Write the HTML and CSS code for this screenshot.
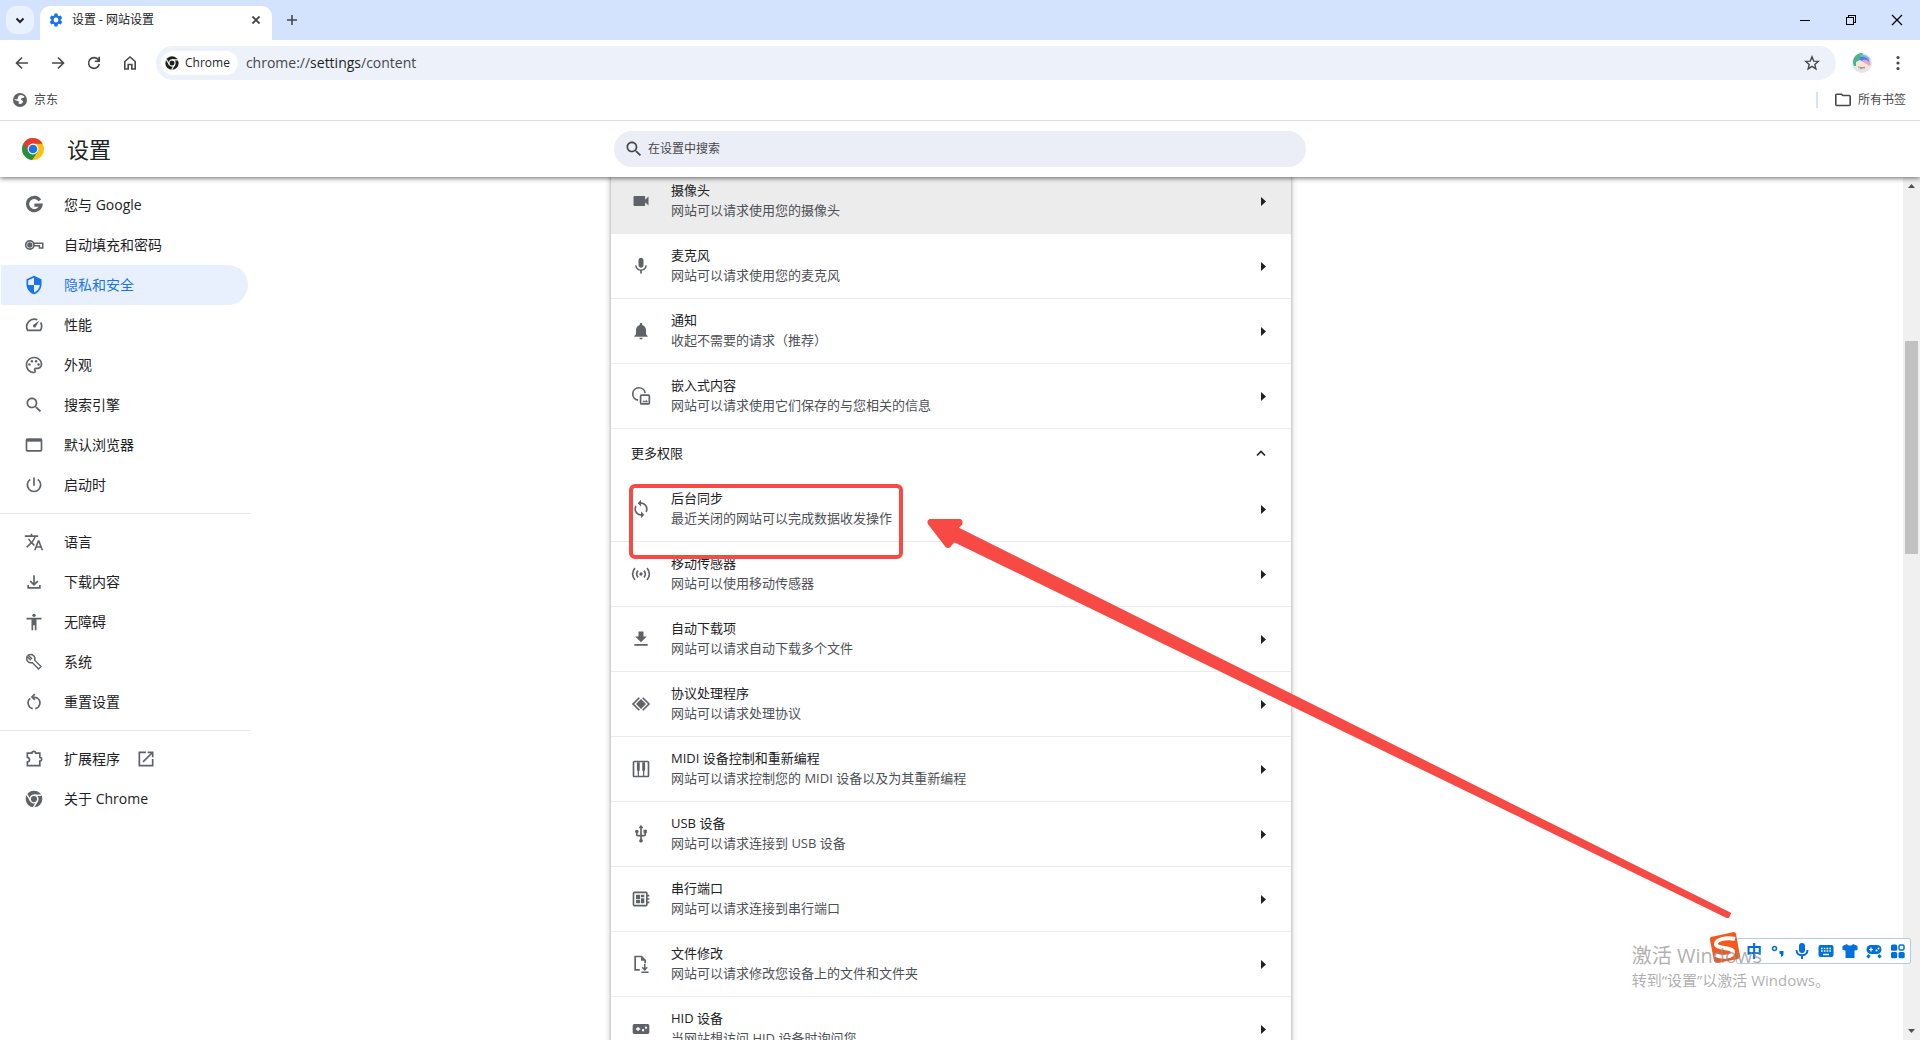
FILE: index.html
```html
<!DOCTYPE html>
<html lang="zh-CN">
<head>
<meta charset="utf-8">
<title>设置 - 网站设置</title>
<meta name="viewport" content="width=device-width, initial-scale=1">
<link rel="stylesheet" href="styles.css">
</head>
<body>
<svg class="defs" aria-hidden="true">
  <symbol id="search" viewBox="0 0 24 24"><path d="M15.5 14h-.79l-.28-.27C15.41 12.59 16 11.11 16 9.5 16 5.91 13.09 3 9.5 3S3 5.91 3 9.5 5.91 16 9.5 16c1.61 0 3.09-.59 4.23-1.57l.27.28v.79l5 4.99L20.49 19l-4.99-5zm-6 0C7.01 14 5 11.99 5 9.5S7.01 5 9.5 5 14 7.01 14 9.5 11.99 14 9.5 14z"/></symbol>
  <symbol id="chrome-mono" viewBox="0 0 24 24"><circle cx="12" cy="12" r="10"/><g fill="none" stroke="#fff" stroke-width="1.7"><circle cx="12" cy="12" r="4.6"/><path d="M12 7.4h9M8 14.3 3.4 6.4M16 14.3 11.5 22"/></g></symbol>
  <symbol id="mic" viewBox="0 0 24 24"><path d="M12 14c1.66 0 2.99-1.34 2.99-3L15 5c0-1.66-1.34-3-3-3S9 3.34 9 5v6c0 1.66 1.34 3 3 3zm5.3-3c0 3-2.54 5.1-5.3 5.1S6.7 14 6.7 11H5c0 3.41 2.72 6.23 6 6.72V21h2v-3.28c3.28-.48 6-3.3 6-6.72h-1.7z"/></symbol>
  <symbol id="arrow-right" viewBox="0 0 5 9"><path d="M0 0l5 4.5L0 9z"/></symbol>
</svg>

<header class="tab-strip">
  <button class="tab-search" aria-label="搜索标签页"><svg class="line" viewBox="0 0 16 16" width="16" height="16"><path d="M4.500 6.500 8 10l3.500-3.500" stroke-width="2"/></svg></button>
  <div class="tab">
    <svg class="blue" viewBox="0 0 24 24" width="16" height="16"><path d="M19.140 12.940c.04-.3.06-.61.06-.94 0-.32-.02-.64-.07-.94l2.030-1.580c.18-.14.23-.41.12-.61l-1.920-3.320c-.12-.22-.37-.29-.59-.22l-2.390.96c-.5-.38-1.030-.7-1.620-.94l-.36-2.540c-.04-.24-.24-.41-.48-.41h-3.840c-.24 0-.43.17-.47.41l-.36 2.540c-.59.24-1.130.57-1.620.94l-2.390-.96c-.22-.08-.47 0-.59.22L2.740 8.870c-.12.21-.08.47.12.61l2.030 1.580c-.05.3-.09.63-.09.94s.02.64.07.94l-2.030 1.580c-.18.14-.23.41-.12.61l1.920 3.320c.12.22.37.29.59.22l2.390-.96c.5.38 1.030.7 1.620.94l.36 2.540c.05.24.24.41.48.41h3.840c.24 0 .44-.17.47-.41l.36-2.540c.59-.24 1.130-.56 1.620-.94l2.390.96c.22.08.47 0 .59-.22l1.920-3.320c.12-.22.07-.47-.12-.61l-2.010-1.580zM12 15.600a3.600 3.600 0 1 1 0-7.200 3.600 3.600 0 0 1 0 7.200z"/></svg>
    <span class="tab-title">设置 - 网站设置</span>
    <button class="icon-button small" aria-label="关闭标签页"><svg class="line" viewBox="0 0 16 16" width="16" height="16"><path d="M4.500 4.500l7 7M11.500 4.500l-7 7" stroke-width="1.800"/></svg></button>
  </div>
  <button class="icon-button new-tab" aria-label="新标签页"><svg class="line" viewBox="0 0 16 16" width="16" height="16"><path d="M8 3v10M3 8h10" stroke-width="1.600"/></svg></button>
  <div class="window-buttons">
    <button aria-label="最小化"><svg class="line crisp" viewBox="0 0 12 12" width="12" height="12"><path d="M1 6.500h10"/></svg></button>
    <button aria-label="还原"><svg class="line crisp" viewBox="0 0 12 12" width="12" height="12"><path d="M1.500 3.500h7v7h-7zM3.500 3V1.500h7v7H9"/></svg></button>
    <button aria-label="关闭"><svg class="line" viewBox="0 0 12 12" width="12" height="12"><path d="M1 1l10 10M11 1 1 11" stroke-width="1.200"/></svg></button>
  </div>
</header>

<nav class="toolbar" aria-label="导航">
  <button class="icon-button" aria-label="返回"><svg class="line" viewBox="0 0 16 16" width="16" height="16"><path d="M14 8H3M8 2.500 2.500 8 8 13.500" stroke-width="1.600"/></svg></button>
  <button class="icon-button" aria-label="前进"><svg class="line" viewBox="0 0 16 16" width="16" height="16"><path d="M2 8h11M8 2.500 13.500 8 8 13.500" stroke-width="1.600"/></svg></button>
  <button class="icon-button" aria-label="重新加载"><svg class="line" viewBox="0 0 16 16" width="16" height="16"><path d="M13.300 9A5.400 5.400 0 1 1 12.500 5M13.200 1.800v4.500H8.800" stroke-width="1.600"/></svg></button>
  <button class="icon-button" aria-label="主页"><svg class="line" viewBox="0 0 16 16" width="16" height="16"><path d="M2.800 14V6.500L8 2l5.200 4.500V14H9.800V9.500H6.200V14z" stroke-width="1.600"/></svg></button>
  <div class="omnibox">
    <span class="site-chip"><svg width="16" height="16"><use href="#chrome-mono"/></svg>Chrome</span>
    <span class="address">chrome://<b>settings</b>/content</span>
    <button class="icon-button star" aria-label="为此标签页添加书签"><svg class="line" viewBox="0 0 16 16" width="16" height="16"><path d="M8 1.800l1.700 4.300 4.600.3-3.500 3 1.100 4.500L8 11.400l-3.900 2.500 1.100-4.500-3.500-3 4.600-.3z" stroke-width="1.400"/></svg></button>
  </div>
  <button class="icon-button avatar" aria-label="个人资料"><svg viewBox="0 0 20 20" width="20" height="20"><circle cx="10" cy="10" r="10" fill="#e6e4e6"/><path d="M2 13A9 9 0 0 1 10 0l2 3-6 10z" fill="#45b58e"/><path d="M8 2a10 10 0 0 1 10 4l-1 1-8-2z" fill="#66c8d5"/><path d="M8 4c4-1 9 1 10 6l-3 1-7-4z" fill="#6472e8"/><path d="M10 7c4-1 8 1 9 5l-4 1z" fill="#e9a5d4"/><path d="M4 9l4-2 8 5 1 4-9-1-4-2z" fill="#f5e7cf"/><path d="M6 14l7 1M8 16l5-2" stroke="#9a94a0" fill="none"/></svg></button>
  <button class="icon-button" aria-label="自定义及控制"><svg viewBox="0 0 16 16" width="16" height="16"><circle cx="8" cy="2.500" r="1.600"/><circle cx="8" cy="8" r="1.600"/><circle cx="8" cy="13.500" r="1.600"/></svg></button>
</nav>

<div class="bookmarks">
  <a href="#"><svg class="grey" viewBox="0 0 16 16" width="16" height="16"><circle cx="8" cy="8" r="7"/><path d="M7 3.500c2-1.500 5 0 5.500 1.500-1 1.500-3 .5-3.500 2s2 1 2 2.500-2 3-3.500 2.500S7.500 9.500 6 9 2.500 8 2.500 7.500 5 8 5.500 7 6 4.500 7 3.500z" fill="#fff"/></svg>京东</a>
  <a class="all-bookmarks" href="#"><svg class="line" viewBox="0 0 18 16" width="18" height="16"><path d="M1.800 3v9.500c0 .6.400 1 1 1h12.400c.6 0 1-.4 1-1v-8c0-.6-.4-1-1-1H9L7.500 2.300H2.800c-.6 0-1 .2-1 .7z" stroke-width="1.600"/></svg>所有书签</a>
</div>

<header class="settings-header">
  <svg viewBox="0 0 24 24" width="24" height="24"><circle cx="12" cy="12" r="11" fill="#fbc116"/><path d="M12 12 2.470 6.500a11 11 0 0 0 8.600 16.460L16.800 14.700z" fill="#229342"/><path d="M2.470 6.500A11 11 0 0 1 21.600 6.700H12L7.240 14.750z" fill="#e33b2e"/><circle cx="12" cy="12" r="5.400" fill="#fff"/><circle cx="12" cy="12" r="4.300" fill="#1a73e8"/></svg>
  <h1>设置</h1>
  <label class="search"><svg width="20" height="20"><use href="#search"/></svg><input type="text" placeholder="在设置中搜索" aria-label="在设置中搜索"></label>
</header>

<div class="settings-body">
  <nav class="sidebar" aria-label="设置">
    <a href="#"><svg viewBox="0 0 24 24"><path d="M19 6.400A8 8 0 1 0 20.200 12.200H12.500" fill="none" stroke="currentColor" stroke-width="3.800"/><path d="M20.200 10.400h1.700v3.600h-3.600z"/></svg>您与 Google</a>
    <a href="#"><svg class="line" viewBox="0 0 24 24"><circle cx="7" cy="12" r="5"/><circle cx="7" cy="12" r="2.200" fill="currentColor"/><path d="M12 10h10.500v5.500h-4V13H12" stroke-width="1.800"/></svg>自动填充和密码</a>
    <a class="active" href="#" aria-current="page"><svg viewBox="0 0 24 24"><path d="M12 1L3 5v6c0 5.550 3.840 10.740 9 12 5.160-1.260 9-6.450 9-12V5l-9-4zm0 10.990h7c-.53 4.120-3.280 7.790-7 8.940V12H5V6.300l7-3.110v8.800z"/></svg>隐私和安全</a>
    <a href="#"><svg class="line" viewBox="0 0 24 24"><path d="M16 5.800A9 9 0 0 0 4.500 18.500h15A9 9 0 0 0 20 9" stroke-width="2"/><path d="M18.500 6.500 11 12a2 2 0 0 0 2.700 2.700z" fill="currentColor" stroke="none"/></svg>性能</a>
    <a href="#"><svg viewBox="0 0 24 24"><path d="M12 22C6.490 22 2 17.510 2 12S6.490 2 12 2s10 4.040 10 9c0 3.310-2.690 6-6 6h-1.770c-.28 0-.5.22-.5.5 0 .12.05.23.13.33.41.47.64 1.060.64 1.670A2.500 2.500 0 0 1 12 22zm0-18c-4.410 0-8 3.590-8 8s3.590 8 8 8c.28 0 .5-.22.5-.5a.54.54 0 0 0-.14-.35c-.41-.46-.63-1.050-.63-1.650a2.500 2.500 0 0 1 2.500-2.500H16c2.210 0 4-1.790 4-4 0-3.860-3.590-7-8-7z"/><circle cx="6.500" cy="11.500" r="1.500"/><circle cx="9.500" cy="7.500" r="1.500"/><circle cx="14.500" cy="7.500" r="1.500"/><circle cx="17.500" cy="11.500" r="1.500"/></svg>外观</a>
    <a href="#"><svg><use href="#search"/></svg>搜索引擎</a>
    <a href="#"><svg class="line" viewBox="0 0 24 24"><rect x="3" y="5" width="18" height="14" rx="1"/><path d="M3 6.500h18" stroke-width="3"/></svg>默认浏览器</a>
    <a href="#"><svg class="line" viewBox="0 0 24 24"><path d="M12 3v10M7.500 5.200a8 8 0 1 0 9 0" stroke-width="2"/></svg>启动时</a>
    <hr>
    <a href="#"><svg viewBox="0 0 24 24"><path d="M12.870 15.070l-2.540-2.510.03-.03c1.740-1.940 2.980-4.170 3.710-6.530H17V4h-7V2H8v2H1v1.990h11.170C11.500 7.920 10.440 9.750 9 11.350 8.070 10.320 7.300 9.190 6.690 8h-2c.73 1.630 1.730 3.170 2.980 4.560l-5.090 5.020L4 19l5-5 3.110 3.110.76-2.040zM18.500 10h-2L12 22h2l1.120-3h4.750L21 22h2l-4.500-12zm-2.620 7l1.620-4.330L19.120 17h-3.240z"/></svg>语言</a>
    <a href="#"><svg class="line" viewBox="0 0 24 24"><path d="M12 4v11M7.500 11l4.500 4.500 4.500-4.500M5 15.500V19h14v-3.500"/></svg>下载内容</a>
    <a href="#"><svg viewBox="0 0 24 24"><circle cx="12" cy="4" r="2"/><path d="M21 9h-6v13h-2v-6h-2v6H9V9H3V7h18z"/></svg>无障碍</a>
    <a href="#"><svg class="line" viewBox="0 0 24 24"><path d="M5 3.800 9 7.500 7.500 9.200 3.700 5.500C2.800 8 3.200 10 4.600 11.400c1.500 1.500 3.500 1.900 5.300 1.300l7.600 7.600 2.900-2.900-7.600-7.600c.7-1.800.3-3.900-1.200-5.300C9.700 2.800 7.300 2.600 5 3.800z" stroke-width="1.700"/></svg>系统</a>
    <a href="#"><svg class="line" viewBox="0 0 24 24"><path d="M10.500 20a7 7 0 0 1-3-12.300M13.500 20a7 7 0 0 0 3-12.300M11.500 6.500A7 7 0 0 1 16.500 7.700M13 2.500 9.500 6 13 9.500"/></svg>重置设置</a>
    <hr>
    <a href="#"><svg class="line" viewBox="0 0 24 24"><path d="M4 5h5.500c0-3 4.500-3 4.500 0h5v5c3 .300 3 4.200 0 4.500V20H4v-4.500c3.500-.5 3.500-5 0-5.500z"/></svg>扩展程序<svg class="external" viewBox="0 0 24 24"><path d="M19 19H5V5h7V3H3v18h18v-9h-2v7zM14 3v2h3.590l-9.830 9.830 1.410 1.410L19 6.410V10h2V3h-7z"/></svg></a>
    <a href="#"><svg><use href="#chrome-mono"/></svg>关于 Chrome</a>
  </nav>

  <main class="content">
    <section class="card" aria-label="权限">
      <a class="row hovered" href="#"><svg viewBox="0 0 24 24"><path d="M17 10.500V7c0-.55-.45-1-1-1H4c-.55 0-1 .45-1 1v10c0 .55.45 1 1 1h12c.55 0 1-.45 1-1v-3.500l4 4v-11l-4 4z"/></svg><span class="label">摄像头<small>网站可以请求使用您的摄像头</small></span><svg class="arrow"><use href="#arrow-right"/></svg></a>
      <a class="row" href="#"><svg><use href="#mic"/></svg><span class="label">麦克风<small>网站可以请求使用您的麦克风</small></span><svg class="arrow"><use href="#arrow-right"/></svg></a>
      <a class="row" href="#"><svg viewBox="0 0 24 24"><path d="M12 22c1.100 0 2-.9 2-2h-4c0 1.100.89 2 2 2zm6-6v-5c0-3.070-1.640-5.640-4.500-6.320V4c0-.83-.67-1.500-1.500-1.500s-1.500.67-1.500 1.500v.68C7.630 5.360 6 7.920 6 11v5l-2 2v1h16v-1l-2-2z"/></svg><span class="label">通知<small>收起不需要的请求（推荐）</small></span><svg class="arrow"><use href="#arrow-right"/></svg></a>
      <a class="row" href="#"><svg class="line" viewBox="0 0 24 24"><path d="M8.500 17A7.500 7.500 0 1 1 17 8.500"/><rect x="11.500" y="11" width="10.500" height="10.500" rx="1"/><path d="M13.500 19.500l2-2.500 1.500 1.500 1.500-2 2 3z" fill="currentColor" stroke="none"/></svg><span class="label">嵌入式内容<small>网站可以请求使用它们保存的与您相关的信息</small></span><svg class="arrow"><use href="#arrow-right"/></svg></a>
      <button class="group-toggle" aria-expanded="true">更多权限<svg class="line" viewBox="0 0 12 12" width="12" height="12"><path d="M2 8.500l4-4 4 4" stroke-width="1.600"/></svg></button>
      <a class="row first" href="#"><svg viewBox="0 0 24 24"><path d="M12 4V1L8 5l4 4V6c3.310 0 6 2.690 6 6 0 1.010-.25 1.970-.7 2.800l1.460 1.460C19.540 15.030 20 13.570 20 12c0-4.420-3.580-8-8-8zm0 14c-3.310 0-6-2.690-6-6 0-1.010.25-1.970.7-2.800L5.240 7.740C4.460 8.970 4 10.430 4 12c0 4.420 3.580 8 8 8v3l4-4-4-4v3z"/></svg><span class="label">后台同步<small>最近关闭的网站可以完成数据收发操作</small></span><svg class="arrow"><use href="#arrow-right"/></svg></a>
      <a class="row" href="#"><svg class="line" viewBox="0 0 24 24"><circle cx="12" cy="12" r="2" fill="currentColor" stroke="none"/><path d="M8.500 8a5.500 5.500 0 0 0 0 8M15.500 8a5.500 5.500 0 0 1 0 8M4.800 5a10 10 0 0 0 0 14M19.200 5a10 10 0 0 1 0 14"/></svg><span class="label">移动传感器<small>网站可以使用移动传感器</small></span><svg class="arrow"><use href="#arrow-right"/></svg></a>
      <a class="row" href="#"><svg viewBox="0 0 24 24"><path d="M19 9h-4V3H9v6H5l7 7 7-7zM4 18v2h16v-2H4z"/></svg><span class="label">自动下载项<small>网站可以请求自动下载多个文件</small></span><svg class="arrow"><use href="#arrow-right"/></svg></a>
      <a class="row" href="#"><svg viewBox="0 0 24 24"><path d="M12 6l6 6-6 6-6-6z"/><path d="M10 4.500 2.500 12l7.500 7.500M14 4.500l7.500 7.500-7.500 7.500" fill="none" stroke="currentColor" stroke-width="2"/></svg><span class="label">协议处理程序<small>网站可以请求处理协议</small></span><svg class="arrow"><use href="#arrow-right"/></svg></a>
      <a class="row" href="#"><svg class="line" viewBox="0 0 24 24"><rect x="3" y="3" width="18" height="18" rx="1"/><path d="M8.800 4v10M15.200 4v10" stroke-width="3.400"/><path d="M8.800 13v8M15.200 13v8" stroke-width="1.500"/></svg><span class="label">MIDI 设备控制和重新编程<small>网站可以请求控制您的 MIDI 设备以及为其重新编程</small></span><svg class="arrow"><use href="#arrow-right"/></svg></a>
      <a class="row" href="#"><svg viewBox="0 0 24 24"><path d="M15 7v4h1v2h-3V5h2l-3-4-3 4h2v8H8v-2.070c.7-.37 1.200-1.080 1.200-1.930 0-1.210-.99-2.200-2.200-2.200-1.210 0-2.200.99-2.200 2.200 0 .85.5 1.560 1.200 1.930V13c0 1.110.89 2 2 2h3v3.050c-.71.37-1.200 1.100-1.200 1.950 0 1.220.99 2.200 2.200 2.200 1.210 0 2.200-.98 2.200-2.200 0-.85-.49-1.580-1.200-1.950V15h3c1.110 0 2-.89 2-2v-2h1V7h-4z"/></svg><span class="label">USB 设备<small>网站可以请求连接到 USB 设备</small></span><svg class="arrow"><use href="#arrow-right"/></svg></a>
      <a class="row" href="#"><svg class="line" viewBox="0 0 24 24"><rect x="3" y="4" width="16" height="16" rx="1"/><path d="M19 8h3M19 12h3M19 16h3"/><path d="M6 7h5v5H6zM12 7h4v3h-4zM6 13h5v4H6zM12 11h4v6h-4z" fill="currentColor" stroke="none"/></svg><span class="label">串行端口<small>网站可以请求连接到串行端口</small></span><svg class="arrow"><use href="#arrow-right"/></svg></a>
      <a class="row" href="#"><svg class="line" viewBox="0 0 24 24"><path d="M10.500 19H5V3h7.500L17 7.500V11"/><path d="M12 3v5h5z" fill="currentColor" stroke="none"/><path d="M16.500 12v7M13.500 16l3 3 3-3M12.500 22h8.500" stroke-width="1.800"/></svg><span class="label">文件修改<small>网站可以请求修改您设备上的文件和文件夹</small></span><svg class="arrow"><use href="#arrow-right"/></svg></a>
      <a class="row" href="#"><svg viewBox="0 0 24 24"><rect x="2" y="6" width="20" height="12" rx="2"/><path d="M6 12h5M8.500 9.500v5" stroke="#fff" stroke-width="1.600"/><circle cx="14.500" cy="13.500" r="1.400" fill="#fff"/><circle cx="18" cy="10.500" r="1.400" fill="#fff"/></svg><span class="label">HID 设备<small>当网站想访问 HID 设备时询问您</small></span><svg class="arrow"><use href="#arrow-right"/></svg></a>
    </section>
  </main>

  <div class="scrollbar" aria-hidden="true">
    <svg viewBox="0 0 7 4" width="7" height="4"><path d="M0 4l3.500-4L7 4z"/></svg>
    <span class="thumb"></span>
    <svg viewBox="0 0 7 4" width="7" height="4"><path d="M0 0l3.500 4L7 0z"/></svg>
  </div>
</div>

<div class="highlight" aria-hidden="true"></div>
<svg class="pointer" viewBox="0 0 806 402" width="806" height="402" aria-hidden="true"><path d="M3 4h30q2.500 1 1 4.500l-4 3.500 773 385.500-2 4L27 25l-4 5q-2 2-4 0L2 8q-1.500-3 1-4z" stroke="#f74a45" stroke-width="2" stroke-linejoin="round"/></svg>

<div class="ime">
  <svg class="ime-logo" viewBox="0 0 32 32" width="32" height="32"><path d="M2 5 25 0q2 0 2 2l4 22q0 2-2 3L8 31q-2 0-3-2L1 8q-1-2 1-3z" fill="#f4581c"/><path d="M26 7C18 5 7 7 7 12s17 3 17 8-10 6-18 3" fill="none" stroke="#fff" stroke-width="4"/></svg>
  <button>中</button>
  <button aria-label="标点"><svg viewBox="0 0 16 16"><circle cx="4.500" cy="5.500" r="2" fill="none" stroke="currentColor" stroke-width="1.500"/><path d="M9.500 8h4v3c0 1.500-1 2.500-2.500 3v-3H9.500z"/></svg></button>
  <button aria-label="语音"><svg viewBox="0 0 16 16"><rect x="5" width="6" height="10" rx="3"/><path d="M2.500 7c0 7 11 7 11 0M8 12v4" fill="none" stroke="currentColor" stroke-width="2"/></svg></button>
  <button aria-label="键盘"><svg viewBox="0 0 16 16"><rect x=".5" y="2" width="15" height="12" rx="2"/><path d="M3 5.500h10M3 8h10" stroke="#fff" stroke-width="1.500" stroke-dasharray="1.600 1.200"/><path d="M5 11.500h6" stroke="#fff" stroke-width="1.500"/></svg></button>
  <button aria-label="皮肤"><svg viewBox="0 0 16 16"><path d="M5 1c1 2 5 2 6 0l4.500 2v4l-3 .500V15h-9V7.500L.5 7V3z"/></svg></button>
  <button aria-label="游戏"><svg viewBox="0 0 16 16"><rect x=".5" y="2" width="15" height="9" rx="4.500"/><path d="M1.500 14.500l2-2.500M14.500 14.500l-2-2.500" stroke="currentColor" stroke-width="3"/><path d="M3 6.500h4M5 4.500v4" stroke="#fff" stroke-width="1.200"/><circle cx="10.500" cy="7.500" r="1" fill="#fff"/><circle cx="12.500" cy="5.500" r="1" fill="#fff"/></svg></button>
  <button aria-label="工具箱"><svg viewBox="0 0 16 16"><rect x="1" y="1.500" width="6.200" height="6.200" rx="1.500"/><rect x="9" y="2" width="5" height="5" rx="1.500" fill="none" stroke="currentColor" stroke-width="1.500"/><rect x="1" y="9" width="6.200" height="6.200" rx="1.500"/><rect x="8.500" y="9" width="6.200" height="6.200" rx="1.500"/></svg></button>
</div>
<div class="watermark"><p class="watermark-title">激活 Windows</p><p>转到“设置”以激活 Windows。</p></div>
</body>
</html>
```
FILE: styles.css
```css
* { box-sizing: border-box; }

body {
  position: relative;
  display: flex;
  flex-direction: column;
  height: 100vh;
  margin: 0;
  overflow: hidden;
  background: #fff;
  color: #202124;
  font: 13px/20px "Open Sans", "Noto Sans CJK SC", sans-serif;
}

button {
  display: flex;
  align-items: center;
  justify-content: center;
  margin: 0;
  padding: 0;
  border: 0;
  background: none;
  color: inherit;
  font: inherit;
}

a { color: inherit; text-decoration: none; }
svg { display: block; flex: none; fill: currentColor; }
.line { fill: none; stroke: currentColor; stroke-width: 2; }
.window-buttons .line { stroke-width: 1; }
.crisp { shape-rendering: crispEdges; }
.blue { color: #1a73e8; }
.grey { color: #5f6368; }
.defs { position: absolute; width: 0; height: 0; }

/* Tab strip */
.tab-strip {
  display: flex;
  align-items: center;
  flex: none;
  height: 40px;
  padding-left: 6px;
  background: #d3e3fd;
}
.tab-search {
  width: 28px;
  height: 28px;
  border-radius: 10px;
  background: #e9f1fe;
}
.tab {
  display: flex;
  align-items: center;
  align-self: flex-end;
  gap: 8px;
  width: 232px;
  height: 34px;
  margin-left: 6px;
  padding: 0 8px 6px;
  border-radius: 10px 10px 0 0;
  background: #fff;
  font-size: 12px;
  line-height: 16px;
}
.tab-title { flex: 1; }
.icon-button { width: 36px; height: 36px; color: #474747; }
.icon-button.small { width: 16px; height: 16px; }
.new-tab { width: 28px; margin-left: 6px; }
.window-buttons { display: flex; margin-left: auto; color: #000; }
.window-buttons button { width: 46px; height: 40px; }

/* Toolbar */
.toolbar {
  display: flex;
  align-items: center;
  flex: none;
  height: 46px;
  padding: 0 4px;
  background: linear-gradient(#d3e3fd, #d3e3fd) top / 100% 8px no-repeat;
}
.toolbar {
  border-radius: 8px 8px 0 0;
  background: #fff;
}
.omnibox {
  display: flex;
  align-items: center;
  flex: 1;
  height: 34px;
  margin: 0 8px;
  padding: 0 6px 0 5px;
  border-radius: 17px;
  background: #ecf1fa;
}
.site-chip {
  display: flex;
  align-items: center;
  gap: 5px;
  height: 24px;
  padding: 0 8px 0 3px;
  border-radius: 12px;
  background: #fff;
  color: #1f1f1f;
  font-size: 12px;
}
.address { flex: 1; margin-left: 8px; color: #474747; font-size: 14px; }
.address b { color: #1f1f1f; font-weight: 400; }

/* Bookmarks */
.bookmarks {
  display: flex;
  align-items: center;
  justify-content: space-between;
  flex: none;
  height: 35px;
  padding: 0 14px 6px 12px;
  border-bottom: 1px solid #dcdcdc;
  color: #474747;
  font-size: 12px;
}
.bookmarks a { display: flex; align-items: center; gap: 6px; }
.all-bookmarks { padding-left: 16px; border-left: 2px solid #d3e3fd; line-height: 16px; }

/* Settings header: its shadow falls only on what is below it */
.settings-header {
  position: relative;
  z-index: 1;
  display: grid;
  grid-template-columns: 24px 1fr minmax(0, 692px) 1fr 24px;
  align-items: center;
  flex: none;
  height: 56px;
  padding: 0 21px;
  background: #fff;
  box-shadow: 0 1px 5px rgba(0, 0, 0, .6);
  clip-path: inset(0 0 -10px 0);
}
.settings-header h1 { margin: 0; padding-left: 22px; font-size: 22px; font-weight: 400; line-height: 32px; }
.search {
  display: flex;
  align-items: center;
  gap: 4px;
  height: 36px;
  padding: 0 10px;
  border-radius: 18px;
  background: #ebeef7;
  color: #474747;
}
.search input {
  flex: 1;
  min-width: 0;
  padding: 0;
  border: 0;
  outline: 0;
  background: none;
  color: inherit;
  font: inherit;
  font-size: 12px;
}
.search input::placeholder { color: inherit; opacity: 1; }

/* Settings body */
.settings-body {
  display: grid;
  grid-template-columns: 250px 1fr 251px 17px;
  grid-template-rows: minmax(0, 1fr);
  flex: 1;
  min-height: 0;
  overflow: hidden;
}
.sidebar { padding-top: 8px; font-size: 14px; }
.sidebar a {
  display: flex;
  align-items: center;
  gap: 20px;
  height: 40px;
  margin: 0 2px 0 1px;
  padding-left: 23px;
  border-radius: 0 20px 20px 0;
}
.sidebar svg { width: 20px; height: 20px; color: #5f6368; }
.sidebar .external { margin-left: -4px; }
.sidebar .active { background: #e8f0fe; }
.sidebar .active, .sidebar .active svg { color: #1a73e8; }
.sidebar hr { margin: 8px 0; border: 0; border-top: 1px solid #e6e6e6; }

.content { display: flex; justify-content: center; align-items: flex-start; min-width: 0; }
.card {
  width: 100%;
  max-width: 680px;
  margin-top: -9px;
  background: #fff;
  box-shadow: 0 1px 2px rgba(60, 64, 67, .3), 0 1px 5px 1px rgba(60, 64, 67, .3);
}
.row {
  display: flex;
  align-items: center;
  height: 65px;
  padding: 0 25px 0 20px;
  border-top: 1px solid #ebebeb;
}
.row.first { border-top-color: transparent; }
.row.hovered { background: #ececec; }
.row svg { width: 20px; height: 20px; color: #5f6368; }
.row .arrow { width: 5px; height: 9px; color: #202124; }
.label { flex: 1; margin-left: 20px; padding-bottom: 2px; }
.label small { display: block; color: #4d5156; font-size: 13px; }
.group-toggle {
  justify-content: space-between;
  width: 100%;
  height: 48px;
  padding: 0 24px 0 20px;
  border-top: 1px solid #ebebeb;
}

.scrollbar {
  grid-column: 4;
  display: flex;
  flex-direction: column;
  align-items: center;
  justify-content: space-between;
  padding: 7px 0;
  background: #f0f0f0;
  color: #505050;
}
.thumb { width: 13px; height: 213px; margin-bottom: 322px; background: #c1c1c1; }

/* Things floating over the window */
.highlight {
  position: absolute;
  top: 484px;
  left: 629px;
  width: 274px;
  height: 75px;
  border: 4px solid #f74a45;
  border-radius: 6px;
}
.pointer { position: absolute; top: 516px; left: 927px; color: #f74a45; }
.ime {
  position: absolute;
  right: 9px;
  bottom: 76px;
  display: flex;
  align-items: center;
  height: 26px;
  padding: 0 0 0 5px;
  border: 1px solid #b4cbe6;
  border-radius: 2px;
  background: #fff;
  color: #0070dc;
  font-size: 16px;
  font-weight: 700;
}
.ime button { width: 24px; height: 24px; }
.ime button svg { width: 16px; height: 16px; }
.ime-logo { position: absolute; bottom: -1px; right: 169px; }
.watermark { position: absolute; right: 90px; bottom: 48px; color: rgba(140, 140, 140, .7); font-size: 15px; }
.watermark p { margin: 0; line-height: 24px; }
.watermark .watermark-title { font-size: 20px; }
```
